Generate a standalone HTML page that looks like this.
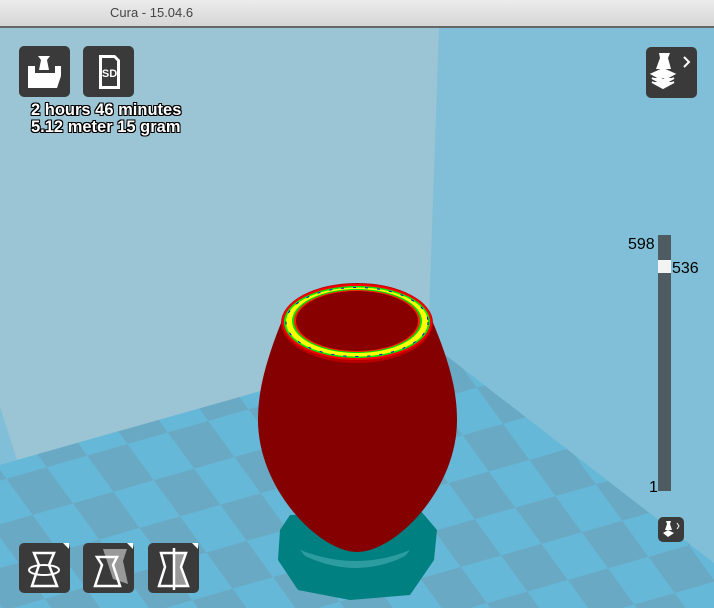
<!DOCTYPE html>
<html><head><meta charset="utf-8"><style>
html,body{margin:0;padding:0;width:714px;height:608px;overflow:hidden;background:#80bfd7;font-family:"Liberation Sans",sans-serif}
.tb{position:absolute;left:0;top:0;width:714px;height:26px;background:linear-gradient(#ececec,#d6d6d6);border-bottom:2px solid #666}
.tb span{position:absolute;left:110px;top:5px;font-size:13px;color:#444}
.btn{position:absolute;background:#3a3a3a;border-radius:5px}
.txt{position:absolute;left:31px;color:#fff;font-size:16.5px;font-weight:bold;line-height:17px;text-shadow:-1px -1px 0 #000,1px -1px 0 #000,-1px 1px 0 #000,1px 1px 0 #000,0 1px 0 #000,0 -1px 0 #000,1px 0 0 #000,-1px 0 0 #000}
.lbl{position:absolute;font-size:16px;color:#000}
</style></head><body>
<svg width="714" height="608" style="position:absolute;left:0;top:0">
<defs>
<clipPath id="fl"><polygon points="17,460 430,343 714,563 714,608 0,608 0,465"/></clipPath>
<pattern id="ck" width="84" height="84" patternUnits="userSpaceOnUse" patternTransform="rotate(-16) skewX(20)">
<rect width="84" height="84" fill="#66b8d8"/><rect width="42" height="42" fill="#69a9c3"/><rect x="42" y="42" width="42" height="42" fill="#69a9c3"/></pattern>
</defs>
<polygon points="0,27 439,27 428,345 17,460 0,407" fill="#9bc4d4"/>
<rect x="0" y="330" width="714" height="278" fill="url(#ck)" clip-path="url(#fl)"/>
<polygon points="290,515 420,510 437,530 434,560 410,595 350,600 298,590 278,560 280,530" fill="#008080"/>
<path d="M300,550 Q357,572 410,550 L405,556 Q357,580 305,556Z" fill="#5ab8c0" opacity=".5"/>
<path d="M283,318 C266,360 258,390 258,420 C258,490 320,552 357,552 C395,552 457,490 457,420 C457,390 449,360 431,318 Z" fill="#850000"/>
<ellipse cx="357" cy="323" rx="76" ry="40" fill="#b80000"/>
<ellipse cx="357" cy="322" rx="75" ry="38" fill="#ff0000"/>
<ellipse cx="357" cy="322" rx="73" ry="36" fill="#00ee00"/>
<ellipse cx="357" cy="322" rx="71" ry="34.5" fill="#ffff00"/>
<ellipse cx="357" cy="322" rx="71" ry="34.5" fill="none" stroke="#0000ff" stroke-width="1" stroke-dasharray="3 9"/>
<ellipse cx="357" cy="321" rx="65" ry="32" fill="#00dd00"/>
<ellipse cx="357" cy="321" rx="63" ry="31" fill="#ff2000"/>
<ellipse cx="357" cy="321" rx="61" ry="30" fill="#880000"/>
<rect x="658" y="235" width="13" height="256" fill="#4e5b61"/>
<rect x="658" y="260" width="13" height="13" fill="#f3f3f3"/>
</svg>
<div class="tb"><span>Cura - 15.04.6</span></div>

<div class="btn" style="left:19px;top:46px;width:51px;height:51px"><svg width="51" height="51"><path d="M19,10 L31,10 L28,14 L30,24 L20,24 L22,14 Z M9,20 L16,20 L16,27 L36,27 L36,20 L42,20 L42,30 L38,42 L9,42 Z" fill="#fff"/></svg></div>
<div class="btn" style="left:83px;top:46px;width:51px;height:51px"><svg width="51" height="51"><path d="M16,9 L32,9 L37,14 L37,43 L16,43 Z" fill="#fff"/><path d="M19,12 L31,12 L34,15 L34,40 L19,40Z" fill="#3a3a3a"/><text x="26.5" y="31" font-family="Liberation Sans" font-weight="bold" font-size="11" fill="#fff" text-anchor="middle">SD</text></svg></div>
<div class="txt" style="top:102px">2 hours 46 minutes</div>
<div class="txt" style="top:119px">5.12 meter 15 gram</div>

<div class="btn" style="left:646px;top:47px;width:51px;height:51px"><svg width="51" height="51"><path d="M13,6 L24,6 L22,11 L25,22 L10,22 L14,11Z" fill="#fff"/><path d="M6,27 L17,22 L28,27 L17,33Z M6,31 L17,37 L28,31 M6,35 L17,41 L28,35" fill="#fff" stroke="#fff" stroke-width="2"/><path d="M38,10 L43,15 L38,20" fill="none" stroke="#fff" stroke-width="2"/></svg></div>

<div class="lbl" style="left:628px;top:236px">598</div>
<div class="lbl" style="left:672px;top:260px">536</div>
<div class="lbl" style="left:649px;top:479px">1</div>
<div class="btn" style="left:658px;top:517px;width:26px;height:25px"><svg width="26" height="25"><path d="M8,4 L13,4 L12,7 L14,13 L7,13 L9,7Z M5,16 L10,13 L16,16 L10,20Z" fill="#fff"/><path d="M19,6 L21,9 L19,12" fill="none" stroke="#fff"/></svg></div>

<div class="btn" style="left:19px;top:543px;width:51px;height:50px"><svg width="51" height="50"><polygon points="44,0 50,0 50,6" fill="#fff"/><path d="M15,10 L35,10 L30,22 L38,43 L13,43 L20,22Z" fill="none" stroke="#fff" stroke-width="2.5"/><ellipse cx="25" cy="27" rx="15" ry="5" fill="none" stroke="#fff" stroke-width="2"/></svg></div>
<div class="btn" style="left:83px;top:543px;width:51px;height:50px"><svg width="51" height="50"><polygon points="44,0 50,0 50,6" fill="#fff"/><path d="M20,6 L44,6 L40,18 L45,41 L30,36 Z" fill="#999"/><path d="M14,14 L34,14 L30,22 L37,43 L12,43 L19,22Z" fill="none" stroke="#fff" stroke-width="2.5"/></svg></div>
<div class="btn" style="left:148px;top:543px;width:51px;height:50px"><svg width="51" height="50"><polygon points="44,0 50,0 50,6" fill="#fff"/><path d="M26,10 L38,10 L33,24 L40,43 L26,43Z" fill="#999"/><path d="M13,10 L38,10 L33,24 L40,43 L11,43 L17,24Z" fill="none" stroke="#fff" stroke-width="2.5"/><line x1="26" y1="5" x2="26" y2="47" stroke="#fff" stroke-width="2.5"/></svg></div>
</body></html>
